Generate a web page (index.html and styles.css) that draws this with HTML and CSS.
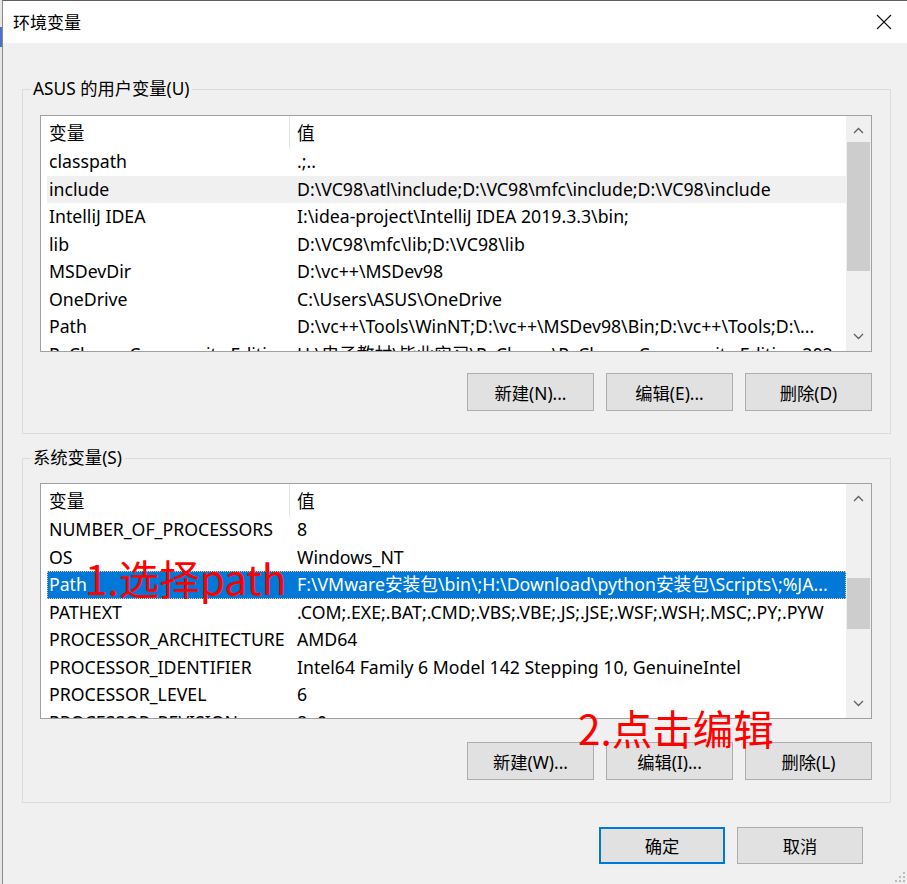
FILE: index.html
```html
<!DOCTYPE html>
<html lang="zh-CN">

<head>
    <meta charset="UTF-8">
    <meta name="viewport" content="width=device-width, initial-scale=1.0">
    <title>环境变量</title>
    <link rel="stylesheet" href="styles.css">
</head>

<body>
    <div class="window">
        <div class="titlebar">
            <span class="title">环境变量</span>
            <svg class="close" width="16" height="16" viewBox="0 0 16 16">
                <path d="M1 1 L15 15 M15 1 L1 15" stroke="#111" stroke-width="1.1" fill="none" />
            </svg>
        </div>

        <!-- 用户变量 -->
        <div class="group group_user">
            <div class="group_title">ASUS 的用户变量(U)</div>
            <div class="list list_user">
                <div class="list_body">
                    <div class="list_head">
                        <div class="cell_name">变量</div>
                        <div class="cell_value">值</div>
                    </div>
                    <div class="row"><div class="cell_name">classpath</div><div class="cell_value">.;..</div></div>
                    <div class="row hover"><div class="cell_name">include</div><div class="cell_value">D:\VC98\atl\include;D:\VC98\mfc\include;D:\VC98\include</div></div>
                    <div class="row"><div class="cell_name">IntelliJ IDEA</div><div class="cell_value">I:\idea-project\IntelliJ IDEA 2019.3.3\bin;</div></div>
                    <div class="row"><div class="cell_name">lib</div><div class="cell_value">D:\VC98\mfc\lib;D:\VC98\lib</div></div>
                    <div class="row"><div class="cell_name">MSDevDir</div><div class="cell_value">D:\vc++\MSDev98</div></div>
                    <div class="row"><div class="cell_name">OneDrive</div><div class="cell_value">C:\Users\ASUS\OneDrive</div></div>
                    <div class="row"><div class="cell_name">Path</div><div class="cell_value">D:\vc++\Tools\WinNT;D:\vc++\MSDev98\Bin;D:\vc++\Tools;D:\...</div></div>
                    <div class="row"><div class="cell_name">PyCharm Community Edition</div><div class="cell_value">H:\电子教材\毕业实习\PyCharm\PyCharm Community Edition 202...</div></div>
                </div>
                <div class="scrollbar">
                    <svg class="arrow" width="25" height="26" viewBox="0 0 25 26">
                        <path d="M8 17 L12.5 12.5 L17 17" stroke="#606060" stroke-width="1.3" fill="none" />
                    </svg>
                    <div class="track"><div class="thumb thumb_user"></div></div>
                    <svg class="arrow" width="25" height="26" viewBox="0 0 25 26">
                        <path d="M8 9 L12.5 13.5 L17 9" stroke="#606060" stroke-width="1.3" fill="none" />
                    </svg>
                </div>
            </div>
            <div class="buttons">
                <button class="btn">新建(N)...</button>
                <button class="btn">编辑(E)...</button>
                <button class="btn">删除(D)</button>
            </div>
        </div>

        <!-- 系统变量 -->
        <div class="group group_sys">
            <div class="group_title">系统变量(S)</div>
            <div class="list list_sys">
                <div class="list_body">
                    <div class="list_head">
                        <div class="cell_name">变量</div>
                        <div class="cell_value">值</div>
                    </div>
                    <div class="row"><div class="cell_name">NUMBER_OF_PROCESSORS</div><div class="cell_value">8</div></div>
                    <div class="row"><div class="cell_name">OS</div><div class="cell_value">Windows_NT</div></div>
                    <div class="row selected"><div class="cell_name">Path</div><div class="cell_value">F:\VMware安装包\bin\;H:\Download\python安装包\Scripts\;%JA...</div></div>
                    <div class="row"><div class="cell_name">PATHEXT</div><div class="cell_value">.COM;.EXE;.BAT;.CMD;.VBS;.VBE;.JS;.JSE;.WSF;.WSH;.MSC;.PY;.PYW</div></div>
                    <div class="row"><div class="cell_name">PROCESSOR_ARCHITECTURE</div><div class="cell_value">AMD64</div></div>
                    <div class="row"><div class="cell_name">PROCESSOR_IDENTIFIER</div><div class="cell_value">Intel64 Family 6 Model 142 Stepping 10, GenuineIntel</div></div>
                    <div class="row"><div class="cell_name">PROCESSOR_LEVEL</div><div class="cell_value">6</div></div>
                    <div class="row"><div class="cell_name">PROCESSOR_REVISION</div><div class="cell_value">8e0a</div></div>
                </div>
                <div class="scrollbar">
                    <svg class="arrow" width="25" height="26" viewBox="0 0 25 26">
                        <path d="M8 17 L12.5 12.5 L17 17" stroke="#606060" stroke-width="1.3" fill="none" />
                    </svg>
                    <div class="track"><div class="thumb thumb_sys"></div></div>
                    <svg class="arrow" width="25" height="26" viewBox="0 0 25 26">
                        <path d="M8 9 L12.5 13.5 L17 9" stroke="#606060" stroke-width="1.3" fill="none" />
                    </svg>
                </div>
            </div>
            <div class="buttons buttons_sys">
                <button class="btn">新建(W)...</button>
                <button class="btn">编辑(I)...</button>
                <button class="btn">删除(L)</button>
            </div>
        </div>

        <div class="footer">
            <button class="btn btn_ok">确定</button>
            <button class="btn">取消</button>
        </div>

        <!-- 标注 -->
        <div class="note note1">1.选择path</div>
        <div class="note note2">2.点击编辑</div>

        <svg class="grip" width="10" height="10" viewBox="0 0 10 10">
            <rect x="8" y="0" width="2" height="2" fill="#bbb" />
            <rect x="4" y="4" width="2" height="2" fill="#bbb" />
            <rect x="8" y="4" width="2" height="2" fill="#bbb" />
            <rect x="0" y="8" width="2" height="2" fill="#bbb" />
            <rect x="4" y="8" width="2" height="2" fill="#bbb" />
            <rect x="8" y="8" width="2" height="2" fill="#bbb" />
        </svg>
    </div>
</body>

</html>
```

FILE: styles.css
```css
* {
    margin: 0;
    padding: 0;
    box-sizing: border-box;
}

html,
body {
    width: 907px;
    height: 884px;
    overflow: hidden;
    background-color: #e6e6e6;
}

body {
    position: relative;
    font-family: "Noto Sans", "Noto Sans CJK SC", sans-serif;
    font-size: 17px;
    color: #000;
}

/* 左边露出来的一点桌面 */
body::before {
    content: "";
    position: absolute;
    left: 0;
    top: 27px;
    width: 2px;
    height: 20px;
    background-color: #4a72c8;
}

.window {
    position: relative;
    margin-left: 2px;
    height: 884px;
    background-color: #f0f0f0;
    border-left: 1px solid #8a8a8a;
    border-top: 1px solid #5f5f5f;
}

.titlebar {
    height: 42px;
    background-color: #fff;
    display: flex;
    align-items: center;
    justify-content: space-between;
    padding: 0 15px 0 10px;
}

.title {
    font-size: 17px;
    margin-top: -1px;
}

.close {
    display: block;
}

.group {
    position: relative;
    margin: 46px 16px 0 19px;
    border: 1px solid #dcdcdc;
    padding: 25px 18px 22px 17px;
}

.group_sys {
    margin-top: 24px;
    padding-top: 24px;
}

.group_title {
    position: absolute;
    left: 8px;
    top: -12px;
    padding: 0 2px;
    line-height: 22px;
    font-size: 17.3px;
    background-color: #f0f0f0;
}

.list {
    display: flex;
    height: 237px;
    border: 1px solid #a0a0a0;
    background-color: #fff;
    overflow: hidden;
    font-size: 17.7px;
}

.list_sys {
    height: 236px;
}

.list_body {
    flex: 1;
    overflow: hidden;
}

.list_head {
    display: grid;
    grid-template-columns: 248px 1fr;
    height: 32px;
    line-height: 32px;
}

.list_head .cell_name {
    padding: 1px 0 0 8px;
}

.list_head .cell_value {
    border-left: 1px solid #e5e5e5;
    padding: 1px 0 0 7px;
}

.row {
    display: grid;
    grid-template-columns: 242px 1fr;
    margin-left: 6px;
    height: 27.5px;
    line-height: 27.5px;
    white-space: nowrap;
}

.row .cell_name {
    padding-left: 2px;
    overflow: hidden;
}

.row .cell_value {
    padding-left: 8px;
    overflow: hidden;
}

.hover {
    background-color: #f0f0f0;
}

.selected {
    background-color: #0078d7;
    color: #fff;
    outline: 1px dotted #f3c98a;
    outline-offset: -1px;
}

.scrollbar {
    width: 25px;
    display: flex;
    flex-direction: column;
    background-color: #f0f0f0;
}

.arrow {
    display: block;
    flex: none;
}

.track {
    flex: 1;
    position: relative;
}

.thumb {
    position: absolute;
    left: 1px;
    right: 1px;
    background-color: #cdcdcd;
}

.thumb_user {
    top: 0;
    height: 129px;
}

.thumb_sys {
    top: 68px;
    height: 51px;
}

.buttons {
    display: flex;
    justify-content: flex-end;
    gap: 12px;
    margin-top: 21px;
}

.buttons_sys {
    margin-top: 23px;
}

.btn {
    width: 127px;
    height: 38px;
    background-color: #e1e1e1;
    border: 1px solid #adadad;
    font-family: "Noto Sans", "Noto Sans CJK SC", sans-serif;
    font-size: 17.3px;
    color: #000;
}

.footer {
    display: flex;
    justify-content: flex-end;
    gap: 12px;
    margin: 24px 44px 0 0;
}

.footer .btn {
    width: 126px;
    height: 37px;
}

.footer .btn_ok {
    border: 2px solid #0078d7;
}

/* 红色标注文字 */
.note {
    position: absolute;
    font-family: "Noto Sans CJK SC", sans-serif;
    font-size: 40.5px;
    line-height: 40px;
    color: #ff0000;
    white-space: nowrap;
}

.note1 {
    left: 82px;
    top: 557px;
}

.note2 {
    left: 575px;
    top: 707px;
}

.grip {
    position: absolute;
    right: 2px;
    bottom: 2px;
}
```
